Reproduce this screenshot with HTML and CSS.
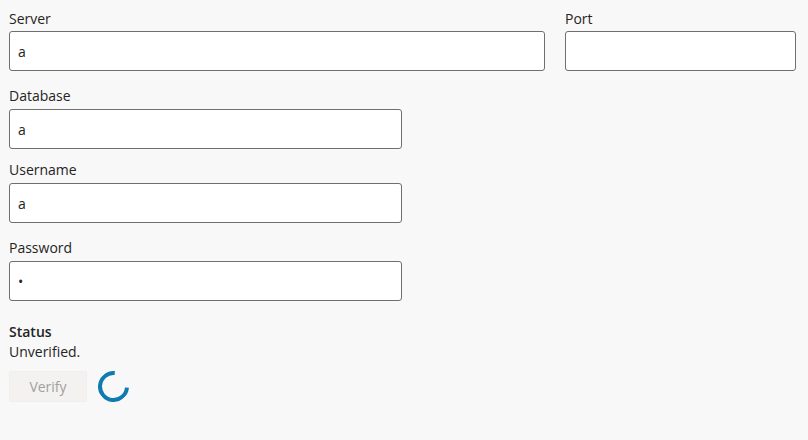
FILE: index.html
```html
<!DOCTYPE html>
<html lang="en">
<head>
    <meta charset="UTF-8">
    <meta name="viewport" content="width=device-width, initial-scale=1.0">
    <title>Connection</title>
    <link rel="stylesheet" href="styles.css">
</head>
<body>
    <div class="form">
        <div class="row">
            <div class="field server">
                <label>Server</label>
                <input type="text" value="a">
            </div>
            <div class="field port">
                <label>Port</label>
                <input type="text" value="">
            </div>
        </div>
        <div class="field half db">
            <label>Database</label>
            <input type="text" value="a">
        </div>
        <div class="field half user">
            <label>Username</label>
            <input type="text" value="a">
        </div>
        <div class="field half pass">
            <label>Password</label>
            <input type="password" value="a">
        </div>
        <div class="status">
            <div class="status-title">Status</div>
            <div class="status-text">Unverified.</div>
        </div>
        <div class="actions">
            <button disabled>Verify</button>
            <div class="spinner"></div>
        </div>
    </div>
</body>
</html>
```

FILE: styles.css
```css
body {
    font-family: "Open Sans", sans-serif;
    font-size: 14px;
    color: #252423;
    background-color: #f8f8f8;
    margin: 0;
    padding: 0;
}

.form {
    width: 787px;
    padding: 9px 0 0 9px;
}

.row {
    display: flex;
    gap: 20px;
}

.field label {
    display: block;
    line-height: 20px;
    margin-bottom: 2px;
}

.field input {
    display: block;
    width: 100%;
    height: 40px;
    box-sizing: border-box;
    border: 1px solid #6f6f6f;
    border-radius: 3px;
    background-color: #fff;
    padding: 0 8px;
    font-family: "Open Sans", sans-serif;
    font-size: 14px;
    color: #252423;
    outline: none;
}

.server {
    width: 536px;
}

.port {
    width: 231px;
}

.half {
    width: 393px;
}

.db {
    margin-top: 15px;
}

.db label,
.user label,
.pass label {
    margin-bottom: 3px;
}

.user {
    margin-top: 11px;
}

.pass {
    margin-top: 15px;
}

.status {
    margin-top: 21px;
    line-height: 20px;
}

.status-title {
    font-weight: 600;
}

.actions {
    display: flex;
    align-items: center;
    gap: 11px;
    margin-top: 9px;
}

.actions button {
    width: 78px;
    height: 31px;
    border: 1px solid #f0efee;
    border-radius: 2px;
    background-color: #f3f2f1;
    color: #a19f9d;
    font-family: "Open Sans", sans-serif;
    font-size: 14px;
    font-weight: 400;
}

.spinner {
    width: 23px;
    height: 23px;
    border: 4px solid #0f7bb0;
    border-top-color: transparent;
    border-radius: 50%;
    transform: rotate(50deg);
}
```
